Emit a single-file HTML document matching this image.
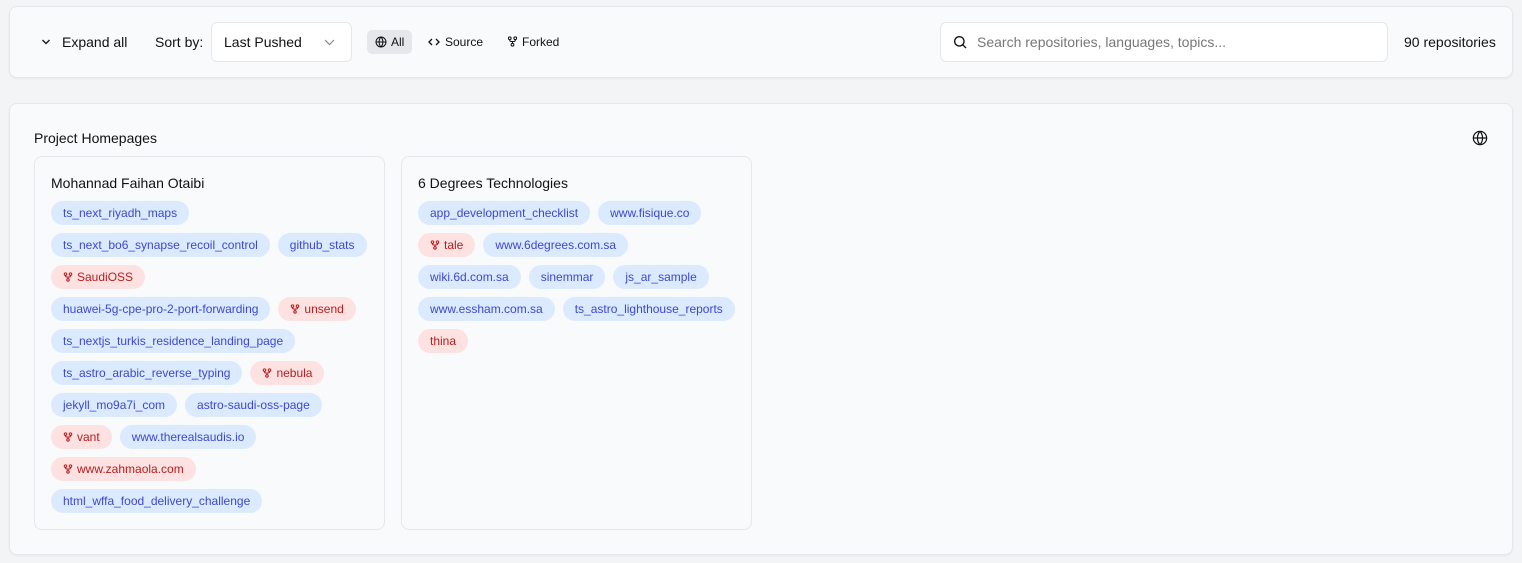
<!DOCTYPE html>
<html><head><style>
*{box-sizing:border-box;margin:0;padding:0}
body{width:1522px;height:563px;background:#f3f4f6;font-family:"Liberation Sans",Arial,sans-serif;color:#111;position:relative;overflow:hidden}
.bar{position:absolute;left:9px;top:6px;width:1504px;height:72px;background:#f9fafb;border:1px solid #e5e7eb;border-radius:8px;box-shadow:0 1px 2px rgba(0,0,0,.05)}
.abs{position:absolute}
.main{position:absolute;left:9px;top:103px;width:1504px;height:452px;background:#f9fafb;border:1px solid #e5e7eb;border-radius:8px;box-shadow:0 1px 2px rgba(0,0,0,.05)}
.card{position:absolute;top:52px;width:351px;height:374px;border:1px solid #e5e7eb;border-radius:8px;background:#f9fafb;padding:18px 15px 0 16px}
.card h3{font-weight:normal;font-size:14px;line-height:16px;margin-bottom:10px;color:#111}
.chips{display:flex;flex-wrap:wrap;gap:8px 8px}
.c{height:24px;line-height:24px;border-radius:12px;padding:0 12px;font-size:12px;background:#dbeafe;color:#3b48d4;white-space:nowrap;display:flex;align-items:center}
.r{background:#fee2e2;color:#b91c1c}
.r svg{margin-right:4px}
</style></head><body>
<div class="bar">
 <svg class="abs" style="left:31px;top:31px" width="10" height="8" viewBox="0 0 10 8"><path d="M1.5 2l3.5 3.5L8.5 2" fill="none" stroke="#222" stroke-width="1.5"/></svg>
 <div class="abs" style="left:52px;top:27px;font-size:14px">Expand all</div>
 <div class="abs" style="left:145px;top:27px;font-size:14px">Sort by:</div>
 <div class="abs" style="left:201px;top:15px;width:141px;height:40px;background:#fff;border:1px solid #e5e7eb;border-radius:6px"></div>
 <div class="abs" style="left:214px;top:27px;font-size:14px">Last Pushed</div>
 <svg class="abs" style="left:314px;top:32px" width="11" height="7" viewBox="0 0 11 7"><path d="M1 1l4.5 4.5L10 1" fill="none" stroke="#888" stroke-width="1.2"/></svg>
 <div class="abs" style="left:357px;top:23px;width:45px;height:24px;background:#e5e7eb;border-radius:5px"></div>
 <svg class="abs" style="left:365px;top:29px" width="12" height="12" viewBox="0 0 24 24" fill="none" stroke="#111" stroke-width="2"><circle cx="12" cy="12" r="10"/><path d="M2 12h20M12 2a15 15 0 0 1 0 20M12 2a15 15 0 0 0 0 20"/></svg>
 <div class="abs" style="left:381px;top:28px;font-size:12px">All</div>
 <svg class="abs" style="left:418px;top:30px" width="12" height="10" viewBox="0 0 12 10"><path d="M4 2L1 5l3 3M8 2l3 3-3 3" fill="none" stroke="#111" stroke-width="1.3"/></svg>
 <div class="abs" style="left:435px;top:28px;font-size:12px">Source</div>
 <svg class="abs" style="left:497px;top:29px" width="11" height="11" viewBox="0 0 24 24" fill="none" stroke="#111" stroke-width="2.2"><circle cx="6" cy="5" r="3"/><circle cx="18" cy="5" r="3"/><circle cx="12" cy="19" r="3"/><path d="M6 8v1a3 3 0 0 0 3 3h6a3 3 0 0 0 3-3V8M12 12v4"/></svg>
 <div class="abs" style="left:512px;top:28px;font-size:12px">Forked</div>
 <div class="abs" style="left:930px;top:15px;width:448px;height:40px;background:#fff;border:1px solid #e5e7eb;border-radius:6px"></div>
 <svg class="abs" style="left:942px;top:27px" width="16" height="16" viewBox="0 0 24 24" fill="none" stroke="#111" stroke-width="2"><circle cx="11" cy="11" r="7"/><path d="M16 16l5 5"/></svg>
 <div class="abs" style="left:967px;top:27px;font-size:14px;color:#777">Search repositories, languages, topics...</div>
 <div class="abs" style="left:1394px;top:27px;font-size:14px">90 repositories</div>
</div>
<div class="main">
 <div class="abs" style="left:24px;top:26px;font-size:14px">Project Homepages</div>
 <svg class="abs" style="left:1462px;top:26px" width="16" height="16" viewBox="0 0 24 24" fill="none" stroke="#111" stroke-width="1.8"><circle cx="12" cy="12" r="10"/><path d="M2 12h20M12 2a15 15 0 0 1 0 20M12 2a15 15 0 0 0 0 20"/></svg>
 <div class="card" style="left:24px">
  <h3>Mohannad Faihan Otaibi</h3>
  <div class="chips">
   <div class="c">ts_next_riyadh_maps</div><div style="width:140px"></div>
   <div class="c">ts_next_bo6_synapse_recoil_control</div><div class="c">github_stats</div>
   <div class="c r"><svg width="10" height="10" viewBox="0 0 24 24" fill="none" stroke="currentColor" stroke-width="2.5"><circle cx="6" cy="5" r="3"/><circle cx="18" cy="5" r="3"/><circle cx="12" cy="19" r="3"/><path d="M6 8v1a3 3 0 0 0 3 3h6a3 3 0 0 0 3-3V8M12 12v4"/></svg>SaudiOSS</div><div style="width:200px"></div>
   <div class="c">huawei-5g-cpe-pro-2-port-forwarding</div><div class="c r"><svg width="10" height="10" viewBox="0 0 24 24" fill="none" stroke="currentColor" stroke-width="2.5"><circle cx="6" cy="5" r="3"/><circle cx="18" cy="5" r="3"/><circle cx="12" cy="19" r="3"/><path d="M6 8v1a3 3 0 0 0 3 3h6a3 3 0 0 0 3-3V8M12 12v4"/></svg>unsend</div>
   <div class="c">ts_nextjs_turkis_residence_landing_page</div><div style="width:60px"></div>
   <div class="c">ts_astro_arabic_reverse_typing</div><div class="c r"><svg width="10" height="10" viewBox="0 0 24 24" fill="none" stroke="currentColor" stroke-width="2.5"><circle cx="6" cy="5" r="3"/><circle cx="18" cy="5" r="3"/><circle cx="12" cy="19" r="3"/><path d="M6 8v1a3 3 0 0 0 3 3h6a3 3 0 0 0 3-3V8M12 12v4"/></svg>nebula</div>
   <div class="c">jekyll_mo9a7i_com</div><div class="c">astro-saudi-oss-page</div>
   <div class="c r"><svg width="10" height="10" viewBox="0 0 24 24" fill="none" stroke="currentColor" stroke-width="2.5"><circle cx="6" cy="5" r="3"/><circle cx="18" cy="5" r="3"/><circle cx="12" cy="19" r="3"/><path d="M6 8v1a3 3 0 0 0 3 3h6a3 3 0 0 0 3-3V8M12 12v4"/></svg>vant</div><div class="c">www.therealsaudis.io</div>
   <div class="c r"><svg width="10" height="10" viewBox="0 0 24 24" fill="none" stroke="currentColor" stroke-width="2.5"><circle cx="6" cy="5" r="3"/><circle cx="18" cy="5" r="3"/><circle cx="12" cy="19" r="3"/><path d="M6 8v1a3 3 0 0 0 3 3h6a3 3 0 0 0 3-3V8M12 12v4"/></svg>www.zahmaola.com</div><div style="width:140px"></div>
   <div class="c">html_wffa_food_delivery_challenge</div>
  </div>
 </div>
 <div class="card" style="left:391px">
  <h3>6 Degrees Technologies</h3>
  <div class="chips">
   <div class="c">app_development_checklist</div><div class="c">www.fisique.co</div>
   <div class="c r"><svg width="10" height="10" viewBox="0 0 24 24" fill="none" stroke="currentColor" stroke-width="2.5"><circle cx="6" cy="5" r="3"/><circle cx="18" cy="5" r="3"/><circle cx="12" cy="19" r="3"/><path d="M6 8v1a3 3 0 0 0 3 3h6a3 3 0 0 0 3-3V8M12 12v4"/></svg>tale</div><div class="c">www.6degrees.com.sa</div><div style="width:90px"></div>
   <div class="c">wiki.6d.com.sa</div><div class="c">sinemmar</div><div class="c">js_ar_sample</div>
   <div class="c">www.essham.com.sa</div><div class="c">ts_astro_lighthouse_reports</div>
   <div class="c r">thina</div>
  </div>
 </div>
</div>
</body></html>
